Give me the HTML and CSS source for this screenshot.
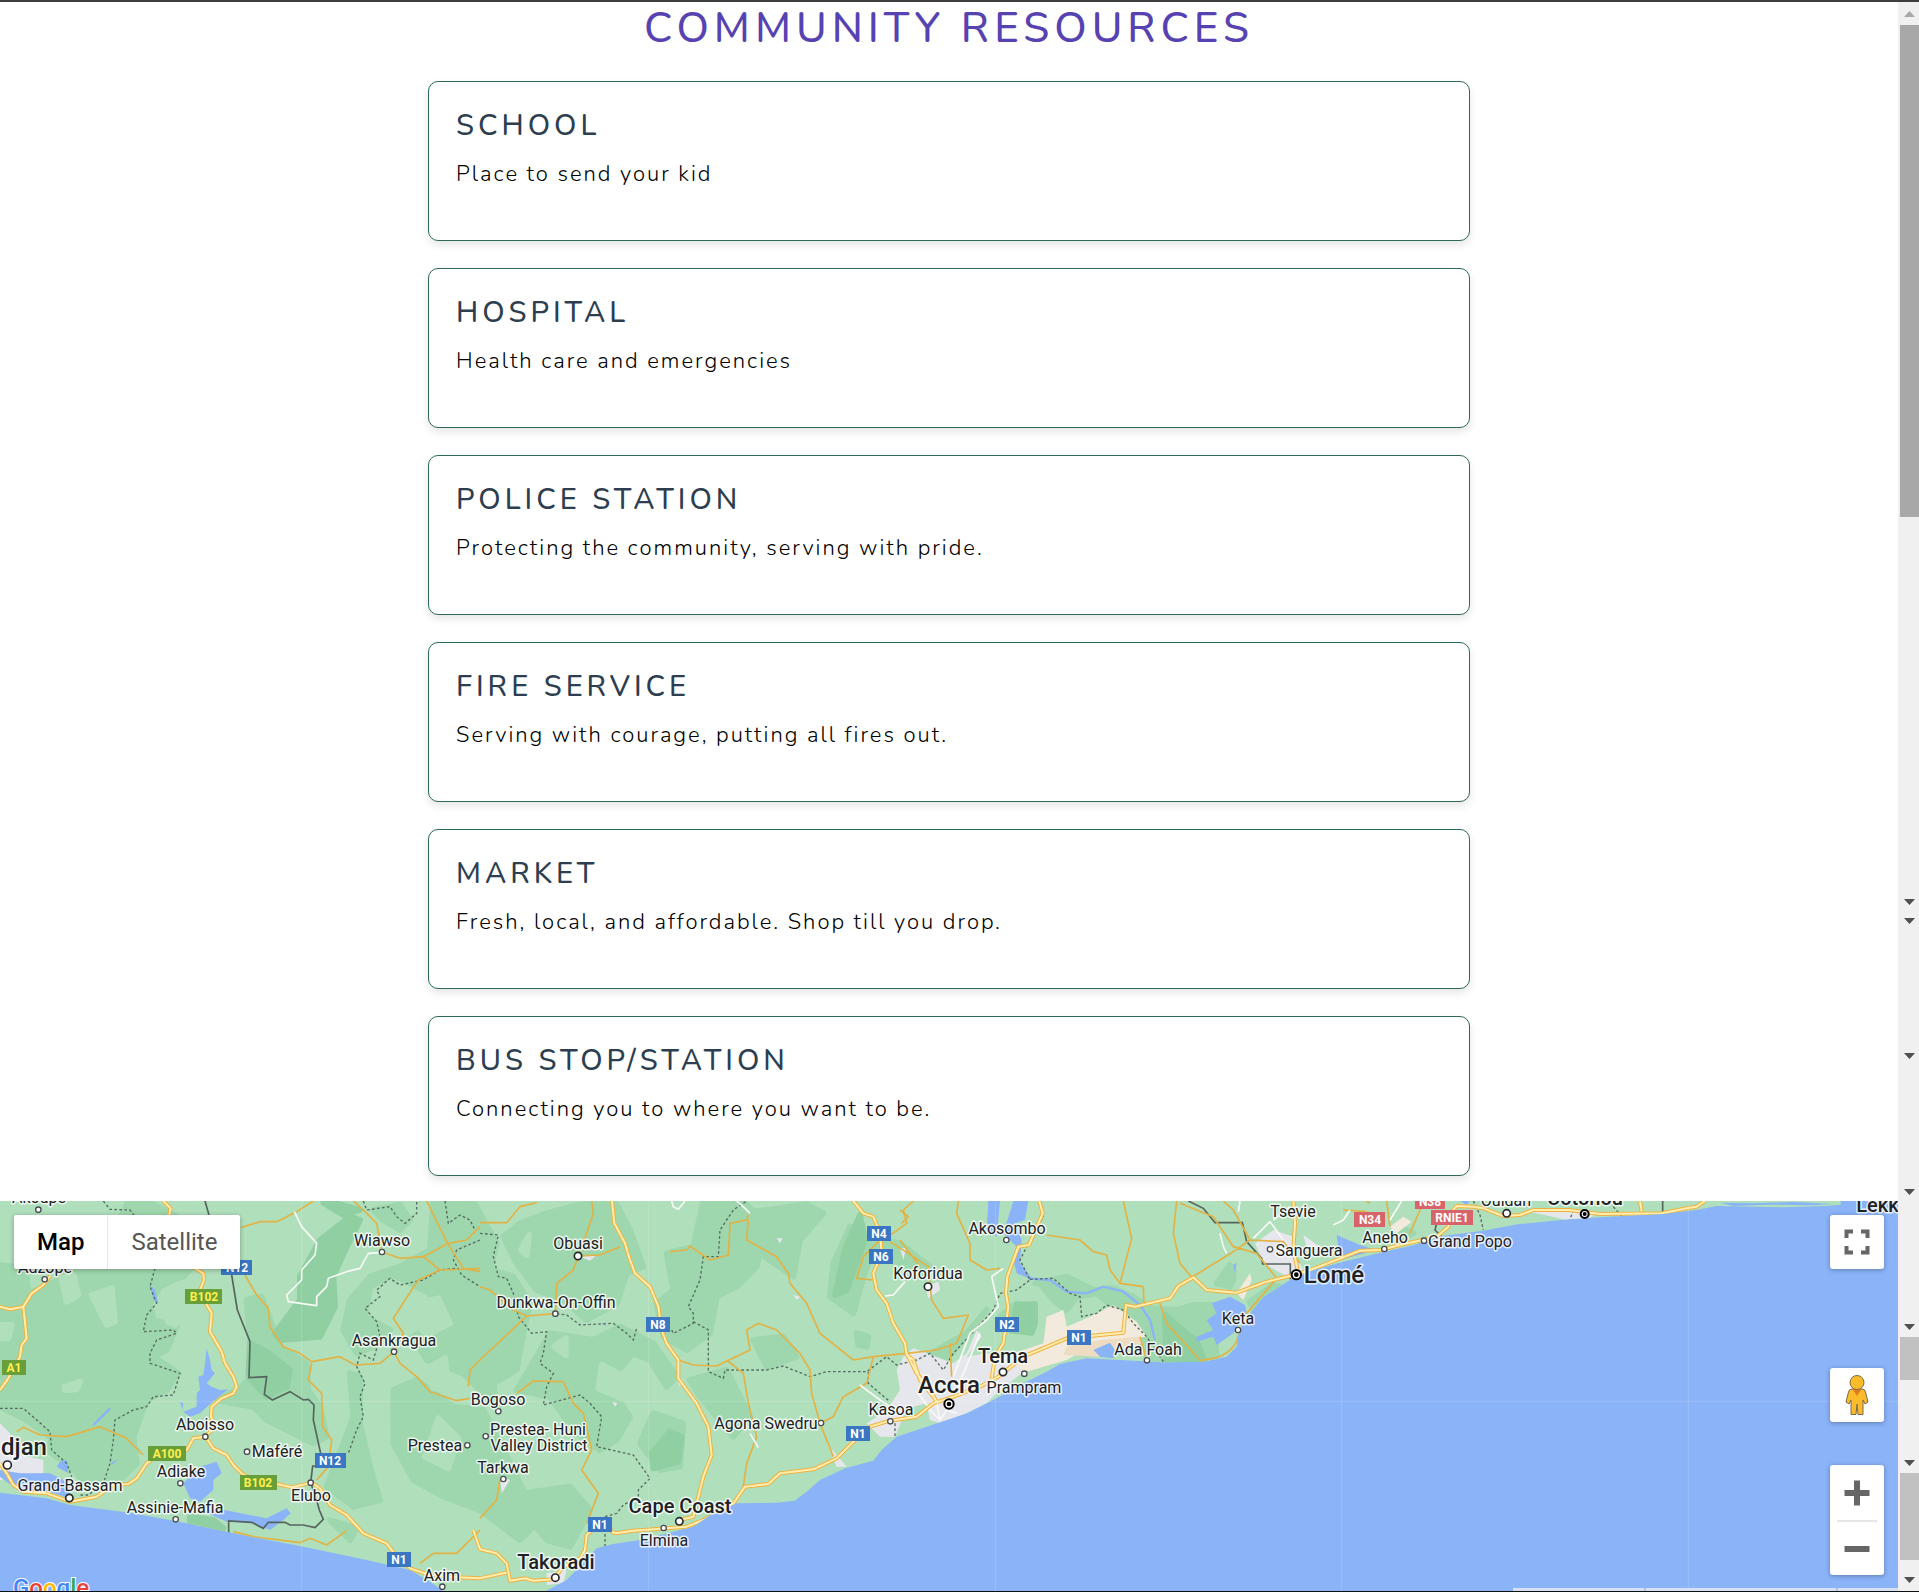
FILE: index.html
```html
<!DOCTYPE html>
<html lang="en">
<head>
<meta charset="utf-8">
<meta name="viewport" content="width=device-width, initial-scale=1">
<title>Community Resources</title>
<link rel="stylesheet" href="styles.css">
</head>
<body>
<div class="page">
  <main class="content">
    <h1 class="title">Community Resources</h1>
    <section class="cards">
      <article class="card"><h2>School</h2><p>Place to send your kid</p></article>
      <article class="card"><h2>Hospital</h2><p>Health care and emergencies</p></article>
      <article class="card"><h2>Police Station</h2><p>Protecting the community, serving with pride.</p></article>
      <article class="card"><h2>Fire Service</h2><p>Serving with courage, putting all fires out.</p></article>
      <article class="card"><h2>Market</h2><p>Fresh, local, and affordable. Shop till you drop.</p></article>
      <article class="card"><h2>Bus Stop/Station</h2><p>Connecting you to where you want to be.</p></article>
    </section>
    <section class="map" aria-label="Map">
      <svg class="map-canvas" viewBox="0 0 1898 390" preserveAspectRatio="xMinYMin slice">
        <defs>
          <clipPath id="landclip"><path id="land" d="M0 33V908L140 925 210 945 400 970 560 1000 700 1030 900 1068 1100 1110 1230 1140 1290 1175 1340 1210H1625L1700 1170 1790 1075 1840 1062 1920 1050 1980 1035 2080 1010 2130 975 2210 940 2330 938 2384 932 2420 905 2460 870 2535 835 2620 812 2645 780 2690 740 2780 710 2820 697 2900 670 2980 630 3070 580 3140 545 3180 522 3260 505 3400 512 3490 517 3610 515 3680 500 3710 470 3717 420 3750 370 3790 320 3870 270 3930 243 4030 215 4140 188 4243 165 4326 138 4449 122 4553 103 4707 88 4800 82 4986 72 5089 60 5151 48 5350 52 5480 48 5522 44V33Z"/></clipPath>
          <g id="highways">
            <path d="M490 33L512 55 508 75M580 232L610 250 612 270 600 300 612 330 635 370 630 425 665 485 675 520 700 560 710 590 700 610 665 625 635 650 633 680 645 710 616 740 580 745 560 780 510 790M0 600L25 565 60 500 65 465 80 445 70 350 95 310 130 285 150 258M0 350L30 358 72 350M0 820L20 850 40 885 70 905 140 910 210 935 290 920 340 885 385 882 410 865 440 820 480 790M616 740L640 775 680 795 700 825 725 850 770 875 830 882 875 892 935 878 960 895 990 945 1040 975 1090 1030 1160 1060 1190 1100 1230 1135 1290 1155 1370 1162 1440 1165 1510 1150 1520 1148"/>
            <path d="M1420 1020L1440 1078 1490 1090 1520 1120 1530 1172 1575 1165 1600 1172 1660 1168 1690 1130 1740 1105 1755 1080 1760 1035 1800 1000 1845 1030 1900 1022 2000 1015 2060 1010 2110 990 2200 940 2235 890 2305 882 2340 850 2440 838 2510 805 2560 755 2610 710 2670 692 2750 680 2800 640 2860 620 2940 590 2995 560 3070 500 3200 445 3370 428 3378 345 3405 350 3510 325 3535 288 3580 262 3620 300 3710 308 3800 275 3870 258 3930 240 4035 200 4080 182 4140 180 4200 165 4310 140 4345 110 4350 70 4370 48 4420 50 4450 55 4510 78 4560 75 4600 60 4707 60 4800 72 4986 70 5060 55 5090 50 5115 33M4920 33L4925 65"/>
            <path d="M1836 33L1843 100 1875 160 1890 210 1905 250 1950 290 1975 350 1985 420 2000 460 2035 510 2035 565 2090 640 2125 710 2135 795 2110 860 2095 920 2080 980 2040 990M2560 33L2590 70 2620 80 2640 130 2645 190 2620 250 2630 300 2660 340 2680 400 2715 460 2720 495 2740 510 2760 570 2815 640M3118 33L3128 70 3087 165 3055 170 3022 260 3018 310 3025 350 3010 460 2985 500 2975 565M2720 490L2750 550 2790 600 2810 635M3880 33L3885 100 3880 180 3893 240"/>
          </g>
        </defs>
        <rect class="sea" width="1898" height="390"/>
        <g transform="translate(0 -11) scale(.33333333)">
          <use href="#land" class="land"/>
          <g clip-path="url(#landclip)">
            <g class="wood">
              <path d="M0 225L45 230 75 220 85 310 150 285 210 240 240 235 300 215 385 33 440 33 550 90 590 215 550 260 530 265 480 290 450 340 460 390 530 410 500 480 460 500 535 550 500 600 440 630 400 740 410 820 370 860 260 890 210 820 160 790 150 740 80 690 0 650Z"/>
              <path d="M740 330L785 320 840 470 920 520 925 600 960 650 980 740 940 760 800 690 760 650 700 640 650 630 710 600 760 560Z"/>
              <path d="M1120 60L1200 45 1230 90 1200 120 1150 90ZM1300 33H1420L1490 160 1470 240 1540 260 1590 340 1570 430 1550 540 1480 580 1490 650 1390 550 1280 510 1240 440 1300 400 1290 310 1180 255 1110 290 1095 380 1170 420 1120 470 1070 490 1030 420 1050 330 1110 260 1200 230 1290 180Z"/>
              <path d="M1180 600L1250 570 1360 650 1450 660 1510 780 1570 900 1610 1000 1560 1050 1440 960 1330 920 1240 870 1180 760ZM1050 550L1080 560 1080 700 1110 830 1140 930 1060 950 980 890 1030 760 1060 680Z"/>
              <path d="M1510 140L1560 100 1640 70 1740 43H1850L1890 120 1930 230 1880 250 1850 340 1760 390 1690 330 1610 300 1550 220ZM2110 33H2230L2300 110 2270 230 2210 290 2150 320 2130 430 2060 480 1990 440 1970 340 2020 300 2000 190 2080 170Z"/>
              <path d="M1650 430L1780 450 1860 410 1960 460 2030 560 2000 590 1950 510 1900 490 1820 580 1890 680 1850 750 1800 780 1720 720 1650 620 1550 600 1610 500ZM1960 670L2050 700 2040 830 1980 840 1920 760ZM2070 570L2180 540 2250 680 2200 740 2100 620Z"/>
              <path d="M2230 70L2420 43 2470 70 2400 150 2380 260 2280 190 2210 230ZM2550 110L2630 160 2590 260 2560 370 2490 320 2500 220ZM2260 450L2350 440 2390 500 2300 530ZM2570 430L2605 440 2600 470 2575 465ZM2600 140L2700 160 2790 230 2760 250 2650 195Z"/>
              <path d="M1570 910L1710 890 1770 960 1710 1070 1640 1050 1600 1000ZM990 990L1070 1015 1050 1050ZM130 770L300 720 410 780 340 830 220 840Z"/>
              <path d="M3105 280L3200 260 3280 300 3340 295 3400 320 3450 355 3530 360 3580 345 3640 345 3650 515 3470 515 3360 370 3290 310 3230 320 3200 360 3160 330 3120 280ZM3000 380L3050 340 3100 350 3090 420 3040 415ZM2740 520L2900 430 2960 360 2910 420 2830 520Z"/>
              <path d="M3650 280L3690 225 3700 235 3700 270 3690 290ZM3750 335L3820 285 3840 290 3760 360ZM4200 110L4240 130 4190 150Z"/>
            </g>
            <g class="forest">
              <path d="M1050 80L1080 90 1040 170 1000 260 1005 350 960 440 840 450 825 430 870 370 900 330 900 260 960 150ZM750 460L800 485 870 540 860 590 800 620 745 560ZM3050 345L3105 343 3105 400 3095 428 3035 422ZM970 38H1000L1080 60 1030 75ZM2010 725L2045 740 2035 815 1960 835 1955 790ZM570 980L640 990 670 1015 570 1000ZM3495 375L3590 455 3615 515 3500 515ZM2580 75L2595 150 2540 300 2505 315 2535 180Z"/>
            </g>
            <g class="clearing">
              <path d="M185 265L220 255 235 315 200 335ZM275 315L335 295 345 395 320 405ZM5 405L35 405 25 445 5 445ZM195 590L240 575 230 598 195 600ZM505 355L535 365 525 405 503 395ZM1205 350L1315 325 1350 400 1280 435ZM1275 540L1335 505 1345 595 1300 595ZM1315 685L1375 745 1345 835 1275 800ZM1663 470L1697 445 1697 495ZM1805 525L1875 560 1865 625 1795 595ZM1580 195L1587 135 1563 180ZM2025 60L2085 45 2065 105ZM2170 375L2187 382 2180 415ZM1235 965L1325 935 1370 1000 1300 1015Z"/>
            </g>
            <g class="sand">
              <path d="M3140 380L3190 360 3200 410 3270 380 3340 345 3410 395 3440 440 3360 450 3290 460 3200 510 3080 545 2990 565 3010 500 3130 460ZM3710 310L3750 250 3755 270 3730 330ZM4170 110L4210 80 4235 95 4190 130Z"/>
            </g>
            <path class="sand-dark" d="M3200 470L3300 450 3420 440 3430 460 3300 500 3190 495Z"/>
            <g class="urban">
              <path d="M2710 500L2740 475 2780 490 2860 520 2900 490 2930 420 2945 440 2900 500 2960 490 3030 500 3070 545 2990 610 2960 640 2880 680 2820 700 2790 690 2780 640 2720 655 2685 740 2640 740 2600 700 2660 660 2700 600 2690 540ZM0 700L30 730 40 790 130 810 130 850 0 870ZM1740 200L1790 195 1770 212ZM2775 290L2815 275 2820 300 2785 325ZM3765 160L3820 120 3880 140 3890 200 3920 260 3870 265 3790 220ZM3910 135L3960 170 3930 210ZM2480 760L2540 830 2510 830ZM4590 65L4700 55 4790 65 4770 85 4700 90ZM1640 1150L1700 1140 1690 1180 1640 1185Z"/>
              <path d="M1500 860L1530 870 1505 910ZM2030 565L2050 570 2040 590ZM2380 315L2400 320 2390 330ZM2330 145L2348 145 2340 160ZM1838 635L1852 640 1845 650ZM2700 175L2718 175 2710 210Z"/>
            </g>
            <g class="water">
              <path d="M620 475L630 510 635 540 645 550 620 580 635 590 660 600 685 598 650 625 600 670 570 680 550 665 590 650 590 610 600 600 595 560 610 555 615 520ZM540 635L550 640 548 660ZM450 285L465 300 475 340 460 330ZM600 830L650 815 665 850 640 870 640 900 600 935 570 925 550 880ZM640 955L700 965 800 985 860 955 872 970 850 990 810 1020 760 1000 680 995 600 960ZM180 815L200 810 205 850 170 830ZM330 820L355 808 340 822ZM0 840L60 850 150 850 190 870 220 930 150 905 60 905 0 860Z"/>
              <path d="M2965 33H3000L2990 140 2960 120ZM3040 33H3085L3075 90 3045 100 3065 150 3060 220 3100 270 3050 250 3040 210 3050 170 3010 130ZM3280 480L3330 458 3345 480 3340 505 3300 500ZM3635 340L3690 320 3735 345 3740 370 3700 430 3650 465 3640 440 3590 455 3590 440 3640 420 3620 390 3650 370ZM3700 225L3710 218 3705 250ZM4010 135L4080 165 4130 180 4020 210ZM4380 33H4410L4400 45ZM1810 400L1820 408 1805 402ZM5160 38L5260 40 5380 36 5500 42 5440 46 5300 44 5200 48Z"/>
              <path class="river" d="M3085 265L3150 270 3200 305 3260 310 3310 290 3370 305 3420 345 3450 390 3465 450M280 705L330 655"/>
            </g>
            <g class="borders">
              <path d="M310 33L330 58 390 60 420 100 450 140M465 235L450 290 470 340 440 375 430 425 520 420 530 430 470 450 450 490 450 520 540 550 520 615 460 620 440 650 400 660 345 690 340 750 330 820 310 880 265 915 235 915M0 655H70L150 725 155 780 200 820 215 860M1090 33L1100 60 1170 50 1190 80 1215 100 1250 70 1250 33M1335 33L1345 100 1380 75 1410 90 1425 120M1440 150L1370 180 1360 210 1385 255 1440 290M1365 235L1320 240 1270 270 1200 285 1170 265 1130 300 1140 320 1095 355 1130 395 1140 440 1120 510 1080 490 1070 530 1095 580 1080 620 1090 680 1070 720 1045 790"/>
              <path d="M1440 130L1495 135 1480 200 1495 260 1520 265 1540 310 1555 380 1595 430 1640 425 1630 490 1620 520 1660 550 1640 590 1630 645 1740 615 1770 640 1805 680 1790 770 1900 795 1950 865 1915 900 1915 920 1870 945 1850 970 1815 980V1070M1670 371L1700 375 1740 405 1840 400 1880 430 1900 450 1910 415M2015 420L2020 430 2080 400 2080 370 2065 350 2100 270 2110 200H2155L2160 120 2200 60 2240 33M2080 395L2125 420V545L2170 565 2175 540 2300 540 2350 528 2430 560 2480 545 2600 545 2660 500 2690 525 2750 510 2790 490 2830 540 2860 490 2980 360 3000 310 3050 300 3090 270 3060 210 3090 150 3130 80 3120 33M3090 268L3160 265 3210 310 3240 320 3245 380 3290 370 3320 345 3370 360 3400 400 3440 440 3490 515M2605 545V580L2670 635M2685 700V740M4420 33L4440 75 4450 120M4720 60L4708 95M4840 50L4870 85"/>
            </g>
            <path class="frontier" d="M615 33L627 75M695 255L712 360 750 455 747 563 800 560 793 613 817 630 870 605 910 630 925 628 942 645 940 690 962 790 985 830 938 828 932 878 950 930 958 960 970 988 945 1013 910 1005 870 1005 855 997 805 997 790 1015 755 997 686 993V1028M3565 33L3610 55 3645 98H3727L3740 155 3785 205 3788 222H3871V268M4310 100L4305 120 4325 140 4190 165M4988 33V72"/>
            <g class="minor">
              <path d="M725 112L780 95 830 95 890 65 940 33M735 255L770 315 805 355 810 410 850 470 900 490 935 515 1020 500 1065 525 1140 520 1182 485 1200 520 1250 560 1290 605 1370 632 1410 625M1182 485L1210 430 1180 385 1235 300 1255 270 1320 240M935 520L925 570 965 610 968 710 995 750 985 830 950 870M1060 33L1090 60 1130 100 1146 186 1200 205 1270 200 1345 160 1400 150 1440 110M1280 33L1340 155 1390 235 1440 245M1270 200L1320 240 1440 235M50 725L70 712 120 735 200 740 300 710 380 745 430 795M700 1025L760 1040 900 1058 930 1045 980 1065 1040 1022M1260 1120L1300 1090 1370 1090 1440 1020M1440 510L1410 540 1405 590"/>
              <path d="M1440 98L1520 98 1560 50 1610 38M1775 33L1780 70 1760 130 1734 198 1800 195 1860 170M1734 198L1720 240 1670 280 1666 371 1580 378 1540 360 1470 300 1440 290M1580 378L1440 510M2010 185L2060 180 2070 168 2130 210 2185 195 2190 100 2240 90 2245 75M2245 90L2240 150 2330 200 2365 250 2370 280 2420 340 2460 430 2560 510 2620 500 2720 490 2810 480 2870 460M2035 510L2080 525 2150 528 2250 480 2240 420 2275 400 2330 420 2400 490 2430 540 2435 610 2460 700 2500 800M2180 510L2230 550 2245 640 2270 740 2240 820 2230 890M2620 500L2600 580 2530 620 2500 680 2460 700M1550 610L1600 573 1690 575 1720 640 1750 670 1775 780 1745 840 1795 910 1760 1000M1500 867L1490 930 1440 985M2640 150L2590 200 2570 265 2620 270M2650 150L2720 100 2710 60 2740 33M2670 155L2740 200 2785 230 2795 330 2830 385 2905 375 2870 460M2850 460L2855 560"/>
              <path d="M2700 150L2760 230M2875 33L2870 70 2910 160 2910 210 2960 240 3000 235M3140 135L3240 150 3280 185 3320 195 3330 240 3360 280 3395 145 3370 33M3360 280L3430 290 3432 345M3530 33L3520 130 3540 220 3575 262 3700 185 3750 150 3700 60 3670 33M3540 40L3640 80 3700 170 3770 190 3830 265 3740 370M3750 150L3850 155 3900 220M3480 340L3500 400 3600 510M3420 440L3440 510M4030 60L4100 65M4160 33L4170 110M4230 130L4260 60 4290 33M4100 33L4110 40M2700 60L2725 80 2705 100"/>
            </g>
            <path class="street" d="M883 65L905 110 950 160 945 195 905 240 905 270 860 315 865 335 950 347V320L980 290 985 265 1040 245 1080 235 1105 190 1145 188M2015 33L2020 50 2035 58 2055 33M2210 33L2230 50 2250 70M2655 318L2680 315 2715 275M2580 585L2640 630 2670 650M2250 730L2275 773M3010 235L2975 260 2995 350 2960 390 2910 430 2860 560M2755 610L2790 660 2820 690 2840 660 2870 670M2820 690L2810 640M3660 130L3670 170 3680 190M3760 145L3810 95 3850 150M3720 33L3715 65M3820 90L3870 50M4000 105L4030 90 4050 60M4205 33L4170 90M2940 430L2870 600"/>
            <use href="#highways" class="casing"/>
            <use href="#highways" class="core"/>
            <path class="minor" d="M3717 420Q3715 480 3650 503L3600 512"/>
          </g>
          <path class="tile-line" d="M905 33V1203M1946 33V1203M2986 33V1203M4025 33V1203M5065 33V1203M0 634H5694"/>
          <g class="dot">
            <circle cx="115" cy="59" r="8"/><circle cx="134" cy="268" r="8"/><circle cx="1146" cy="186" r="8"/><circle cx="1182" cy="485" r="8"/><circle cx="616" cy="740" r="8"/><circle cx="741" cy="785" r="8"/><circle cx="541" cy="880" r="8"/><circle cx="527" cy="988" r="8"/><circle cx="932" cy="878" r="8"/><circle cx="1327" cy="1190" r="8"/><circle cx="1402" cy="766" r="8"/><circle cx="1495" cy="664" r="8"/><circle cx="1666" cy="371" r="8"/><circle cx="1457" cy="739" r="8"/><circle cx="1510" cy="867" r="8"/><circle cx="2463" cy="699" r="8"/><circle cx="2671" cy="694" r="8"/><circle cx="1991" cy="1014" r="8"/><circle cx="3019" cy="150" r="8"/><circle cx="3073" cy="551" r="8"/><circle cx="3441" cy="511" r="8"/><circle cx="3714" cy="420" r="8"/><circle cx="3810" cy="178" r="8"/><circle cx="4153" cy="177" r="8"/><circle cx="4272" cy="152" r="8"/>
          </g>
          <g class="dot dot-large">
            <circle cx="22" cy="825" r="12"/><circle cx="208" cy="924" r="11"/><circle cx="1734" cy="198" r="11"/><circle cx="2038" cy="994" r="11"/><circle cx="1666" cy="1163" r="11"/><circle cx="2784" cy="290" r="11"/><circle cx="3009" cy="546" r="11"/><circle cx="4520" cy="70" r="11"/>
          </g>
          <g class="dot dot-capital">
            <circle cx="2847" cy="642" r="14"/><circle cx="3889" cy="254" r="14"/><circle cx="4754" cy="72" r="12"/>
          </g>
          <g>
            <circle cx="2847" cy="642" r="7"/><circle cx="3889" cy="254" r="7"/><circle cx="4754" cy="72" r="6"/>
          </g>
        </g>
        <g class="shield blue">
          <rect x="221" y="59" width="31" height="15"/><text x="237" y="71">N12</text>
          <rect x="315" y="252" width="31" height="15"/><text x="330" y="264">N12</text>
          <rect x="387" y="351" width="24" height="15"/><text x="399" y="363">N1</text>
          <rect x="588" y="316" width="24" height="15"/><text x="600" y="328">N1</text>
          <rect x="646" y="116" width="24" height="15"/><text x="658" y="128">N8</text>
          <rect x="867" y="25" width="24" height="15"/><text x="879" y="37">N4</text>
          <rect x="869" y="48" width="24" height="15"/><text x="881" y="60">N6</text>
          <rect x="846" y="225" width="24" height="15"/><text x="858" y="237">N1</text>
          <rect x="995" y="116" width="24" height="15"/><text x="1007" y="128">N2</text>
          <rect x="1067" y="129" width="24" height="15"/><text x="1079" y="141">N1</text>
        </g>
        <g class="shield green">
          <rect x="185" y="88" width="37" height="15"/><text x="204" y="100">B102</text>
          <rect x="2" y="159" width="24" height="15"/><text x="14" y="171">A1</text>
          <rect x="148" y="245" width="38" height="15"/><text x="167" y="257">A100</text>
          <rect x="240" y="274" width="37" height="15"/><text x="258" y="286">B102</text>
        </g>
        <g class="shield red">
          <rect x="1354" y="11" width="31" height="15"/><text x="1370" y="23">N34</text>
          <rect x="1415" y="-7" width="30" height="15"/><text x="1430" y="5">N38</text>
          <rect x="1431" y="9" width="42" height="15"/><text x="1452" y="21">RNIE1</text>
        </g>
        <g class="place">
          <text x="39" y="2">Akoupé</text><text x="45" y="72">Adzopé</text><text x="382" y="45">Wiawso</text><text x="394" y="145">Asankragua</text><text x="205" y="229">Aboisso</text><text x="277" y="256">Maféré</text><text x="181" y="276">Adiake</text><text x="70" y="290">Grand-Bassam</text><text x="175" y="312">Assinie-Mafia</text><text x="311" y="300">Elubo</text><text x="442" y="380">Axim</text><text x="435" y="250">Prestea</text><text x="498" y="204">Bogoso</text>
          <text x="578" y="48">Obuasi</text><text x="556" y="107">Dunkwa-On-Offin</text><text x="538" y="234">Prestea- Huni</text><text x="539" y="250">Valley District</text><text x="503" y="272">Tarkwa</text><text x="766" y="228">Agona Swedru</text><text x="891" y="214">Kasoa</text><text x="664" y="345">Elmina</text><text x="928" y="78">Koforidua</text>
          <text x="1007" y="33">Akosombo</text><text x="1024" y="192">Prampram</text><text x="1148" y="154">Ada Foah</text><text x="1238" y="123">Keta</text><text x="1309" y="55">Sanguera</text><text x="1293" y="16">Tsevie</text><text x="1385" y="42">Aneho</text><text x="1470" y="46">Grand Popo</text><text x="1506" y="5">Ouidah</text>
        </g>
        <g class="place town">
          <text x="680" y="312">Cape Coast</text><text x="556" y="368">Takoradi</text><text x="1003" y="162">Tema</text><text x="1585" y="4">Cotonou</text><text x="1880" y="11">Lekki</text>
        </g>
        <g class="place city">
          <text x="24" y="254">djan</text><text x="949" y="192">Accra</text><text x="1334" y="82">Lomé</text>
        </g>
        <text class="logo" x="13" y="395"><tspan fill="#4285f4">G</tspan><tspan fill="#ea4335">o</tspan><tspan fill="#fbbc04">o</tspan><tspan fill="#4285f4">g</tspan><tspan fill="#34a853">l</tspan><tspan fill="#ea4335">e</tspan></text>
        <path class="legal" d="M1513 387H1898V390H1513Z"/>
        <path class="legal-split" d="M1645 387V390M1837 387V390"/>
      </svg>
      <div class="map-type">
        <button class="type active" type="button">Map</button>
        <button class="type" type="button">Satellite</button>
      </div>
      <div class="map-tools">
        <button class="tool" type="button" aria-label="Toggle fullscreen view">
          <svg width="26" height="26" viewBox="0 0 26 26"><path class="corner" d="M2.500 9V2.500H9M17 2.500H23.500V9M23.500 17V23.500H17M9 23.500H2.500V17"/></svg>
        </button>
        <button class="tool pegman" type="button" aria-label="Street View">
          <svg width="24" height="42" viewBox="0 0 24 42"><path class="peg" d="M7 15Q4 15 3.500 18L1 28 4 30 6 26V40.500H11L12 30 13 40.500H18V26L20 30 23 28 20.500 18Q20 15 17 15Z"/><path fill="#e07b1f" d="M7.500 15H16.500L12 22Z"/><circle class="peg" cx="12" cy="8.500" r="7"/></svg>
        </button>
        <div class="zoom">
          <button type="button" aria-label="Zoom in"><svg width="26" height="26" viewBox="0 0 26 26"><path d="M10 0.500H16V10H25.500V16H16V25.500H10V16H0.500V10H10Z"/></svg></button>
          <button type="button" aria-label="Zoom out"><svg width="26" height="26" viewBox="0 0 26 26"><path d="M0.500 10H25.500V16H0.500Z"/></svg></button>
        </div>
      </div>
    </section>
  </main>
  <div class="rail" aria-hidden="true">
    <svg width="21" height="1589" viewBox="0 2 21 1589">
      <path fill="#a8a8a8" d="M2 25H21V517H2ZM6 17L11.500 11 17 17Z"/>
      <path fill="#c1c1c1" d="M2 1337H21V1380H2ZM2 1473H21V1560H2Z"/>
      <path fill="#505050" d="M6 899H17L11.500 905ZM6 918H17L11.500 924ZM6 1053H17L11.500 1059ZM6 1189H17L11.500 1195ZM6 1324H17L11.500 1330ZM6 1460H17L11.500 1466ZM6 1577H17L11.500 1583Z"/>
    </svg>
  </div>
</div>
</body>
</html>
```
FILE: styles.css
```css
* { box-sizing: border-box; }
body {
  margin: 0;
  background: #fff;
  color: #111;
  font-family: Nunito, "Open Sans", "Noto Sans", sans-serif;
}
.page {
  display: grid;
  grid-template-columns: minmax(0, 1fr) 21px;
  border-top: 2px solid #3f3d40;
  border-bottom: 1px solid #0d1014;
}
.rail { background: #f0f0f0; }
.rail svg { display: block; }

.title {
  margin: 0;
  height: 79px;
  line-height: 54px;
  font-size: 42px;
  font-weight: 500;
  letter-spacing: 5px;
  text-align: center;
  text-transform: uppercase;
  color: #5642b0;
}
.cards {
  display: flex;
  flex-direction: column;
  gap: 27px;
  width: 55%;
  margin: 0 auto;
  padding: 0 1px 25px;
}
.card {
  padding: 27px 27px 51px;
  border: 1px solid #2b6b52;
  border-radius: 10px;
  background: #fff;
  box-shadow: 0 4px 8px rgba(0, 0, 0, .1);
}
.card h2 {
  margin: 0 0 16px;
  font-size: 29px;
  line-height: 34px;
  font-weight: 500;
  letter-spacing: 4px;
  text-transform: uppercase;
  color: #2c3e50;
}
.card p {
  margin: 0;
  font-size: 22px;
  font-weight: 300;
  line-height: 30px;
  letter-spacing: 2px;
  color: #000;
}

.map {
  position: relative;
  height: 390px;
  overflow: hidden;
  font-family: Roboto, sans-serif;
}
.map-canvas { display: block; width: 100%; height: 390px; }
.sea { fill: #8ab3f8; }
.land { fill: #b0dfbc; }
.wood, .forest, .clearing { stroke-width: 18; stroke-linejoin: round; }
.wood { fill: #9ed7ad; stroke: #9ed7ad; }
.forest { fill: #90cfa2; stroke: #90cfa2; }
.clearing { fill: #b0dfbc; stroke: #b0dfbc; }
.sand { fill: #f2eadc; }
.sand-dark { fill: #eddcc2; }
.urban { fill: #e6e7ec; }
.water { fill: #8ab3f8; }
.river { fill: none; stroke: #8ab3f8; stroke-width: 7; }
.borders { fill: none; stroke: #546b5f; stroke-width: 4; stroke-dasharray: 8 7; }
.frontier { fill: none; stroke: #56645e; stroke-width: 5; }
.minor { fill: none; stroke: #e3b244; stroke-width: 5; stroke-linejoin: round; }
.street { fill: none; stroke: #f8faf6; stroke-width: 5; stroke-linejoin: round; }
.casing { fill: none; stroke: #efb23f; stroke-width: 12; stroke-linejoin: round; }
.core { fill: none; stroke: #ffeeb0; stroke-width: 6; stroke-linejoin: round; }
.tile-line { fill: none; stroke: #fff; stroke-opacity: .16; stroke-width: 3; }
.dot { fill: #fff; stroke: #4a4d50; stroke-width: 4; }
.dot-large { stroke: #26292c; stroke-width: 5; }
.dot-capital { stroke: #000; stroke-width: 6; }

.place {
  font-size: 16px;
  text-anchor: middle;
  fill: #202124;
  stroke: #fff;
  stroke-opacity: .8;
  stroke-width: 3px;
  stroke-linejoin: round;
  paint-order: stroke;
}
.town { font-size: 20px; font-weight: 500; }
.city { font-size: 24px; font-weight: 500; }
.shield { font-size: 12px; font-weight: 700; text-anchor: middle; }
.shield text { fill: #fff; }
.blue rect { fill: #3a76c4; }
.red rect { fill: #d8636a; }
.green rect { fill: #689f38; }
.green text { fill: #fff04d; }
.logo { font-size: 24px; font-weight: 500; stroke: #fff; stroke-width: 2px; paint-order: stroke; }
.legal { fill: #d6e0f2; }
.legal-split { stroke: #8ba6cf; }

.map button {
  margin: 0;
  padding: 0;
  border: 0;
  background: #fff;
  font: inherit;
  color: #565656;
  cursor: pointer;
}
.map-type, .tool, .zoom {
  border-radius: 3px;
  box-shadow: 0 1px 5px rgba(0, 0, 0, .3);
}
.map-type {
  position: absolute;
  top: 14px;
  left: 14px;
  display: flex;
  height: 54px;
  background: #fff;
  font-size: 24px;
  overflow: hidden;
}
.map .type { padding: 0 23px; }
.map .active { color: #000; font-weight: 500; border-right: 1px solid #e6e6e6; }
.map-tools {
  position: absolute;
  top: 14px;
  right: 14px;
  bottom: 16px;
  width: 54px;
  display: flex;
  flex-direction: column;
}
.map-tools svg { display: block; margin: auto; fill: #666; }
.map .tool { height: 54px; border-radius: 3px; }
.map .pegman { margin-top: auto; margin-bottom: 43px; }
.map-tools .corner { fill: none; stroke: #666; stroke-width: 4; }
.map-tools .peg { fill: #fbbc2c; stroke: #7a6a4c; stroke-width: 1; }
.zoom { background: #fff; height: 110px; display: grid; grid-template-rows: 1fr 1fr; padding: 0 7px; }
.map .zoom button + button { border-top: 2px solid #e6e6e6; }
```
